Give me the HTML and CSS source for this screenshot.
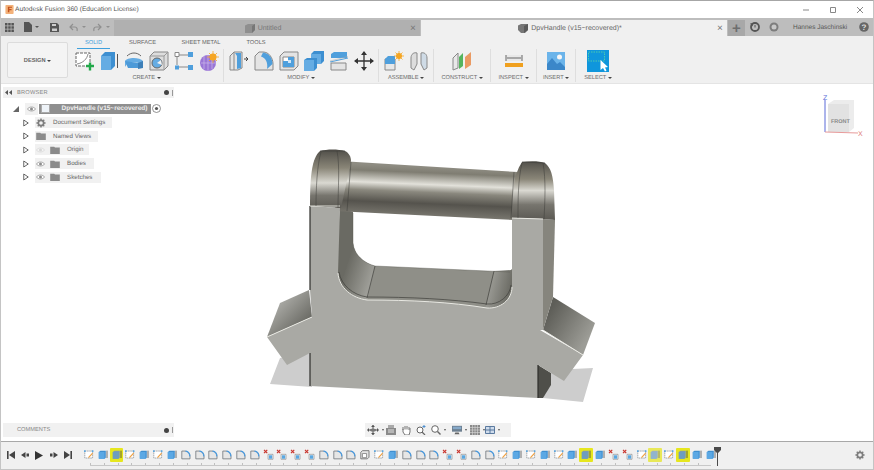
FILE: index.html
```html
<!DOCTYPE html>
<html lang="en">
<head>
<meta charset="utf-8">
<title>Autodesk Fusion 360</title>
<link rel="stylesheet" href="styles.css">
</head>
<body>
<svg class="defs" width="0" height="0">
  <defs>
    <symbol id="i-sketch" viewBox="0 0 14 14">
      <path d="M2 2.500H11.500V11H2Z" fill="#fff" stroke="#7d838b" stroke-width=".8" stroke-dasharray="2 .7"/>
      <path d="M6.500 10.500 11.500 5" stroke="#f0a040" stroke-width="1.400"/>
      <path d="M1 1.500h2v2H1zM10.500 1.500h2v2h-2z" fill="#5aa7e0"/>
    </symbol>
    <symbol id="i-ext" viewBox="0 0 14 14">
      <path d="M2 3.500 4 2H10.500V10.500L9 12H2Z" fill="#3f8fd0"/>
      <path d="M9 3.500V12H2V3.500Z" fill="#5ba8e4"/>
      <path d="M12 2V11" stroke="#555" stroke-width="1"/>
    </symbol>
    <symbol id="i-ext-g" viewBox="0 0 14 14">
      <path d="M2 3.500 4 2H10.500V10.500L9 12H2Z" fill="#7d9ab0"/>
      <path d="M9 3.500V12H2V3.500Z" fill="#6d9dc0"/>
      <path d="M12 2V11" stroke="#444" stroke-width="1"/>
    </symbol>
    <symbol id="i-fillet" viewBox="0 0 14 14">
      <path d="M2 12V2.500H6C9.500 2.500 12 5.500 12 9V12Z" fill="#e6e6e6" stroke="#72777e" stroke-width="1"/>
      <path d="M6.500 2.700C9.500 3 11.700 5.800 11.800 9" fill="none" stroke="#4a9be0" stroke-width="1.500"/>
    </symbol>
    <symbol id="i-x" viewBox="0 0 14 14">
      <path d="M1 1 5 5M5 1 1 5" stroke="#c8322a" stroke-width="1.400"/>
      <path d="M6 6.500H12V12.500H6Z" fill="#fff" stroke="#777" stroke-width=".7"/>
      <path d="M7 7.500H11V12H7Z" fill="#5aa7e0"/>
    </symbol>
    <symbol id="i-shell" viewBox="0 0 14 14">
      <path d="M2 4 4 2H12V10L10 12H2Z" fill="#e4e4e4" stroke="#666" stroke-width="1"/>
      <path d="M4 5.500H9V10.500H4Z" fill="#fff" stroke="#666" stroke-width=".8"/>
    </symbol>
    <symbol id="i-folder" viewBox="0 0 12 10">
      <path d="M0 1H5L6 2H12V10H0Z" fill="#8b8b8b"/>
    </symbol>
    <symbol id="i-eye" viewBox="0 0 12 8">
      <path d="M.5 4C3 .5 9 .5 11.500 4 9 7.500 3 7.500 .5 4Z" fill="#fff" stroke="#8d8d8d"/>
      <circle cx="6" cy="4" r="2" fill="#8d8d8d"/>
    </symbol>
    <symbol id="i-tri" viewBox="0 0 8 10">
      <path d="M1 1 7 5 1 9Z" fill="#fff" stroke="#555" stroke-width="1.200"/>
    </symbol>
    <symbol id="i-gear" viewBox="0 0 12 12">
      <circle cx="6" cy="6" r="3.200" fill="none" stroke="#7e7e7e" stroke-width="2"/>
      <path d="M6 .5V2.500M6 9.500V11.500M.5 6H2.500M9.500 6H11.500M2.100 2.100 3.500 3.500M8.500 8.500 9.900 9.900M9.900 2.100 8.500 3.500M3.500 8.500 2.100 9.900" stroke="#7e7e7e" stroke-width="1.700"/>
    </symbol>
    <linearGradient id="capL" gradientUnits="userSpaceOnUse" x1="325" y1="151" x2="325" y2="208">
      <stop offset="0" stop-color="#54524c"/><stop offset=".3" stop-color="#8a8678"/>
      <stop offset=".56" stop-color="#dad9d2"/><stop offset=".78" stop-color="#77756e"/><stop offset="1" stop-color="#5d5b55"/>
    </linearGradient>
    <linearGradient id="capR" gradientUnits="userSpaceOnUse" x1="530" y1="162" x2="530" y2="219">
      <stop offset="0" stop-color="#54524c"/><stop offset=".3" stop-color="#8a8678"/>
      <stop offset=".5" stop-color="#dad9d2"/><stop offset=".75" stop-color="#77756e"/><stop offset="1" stop-color="#5d5b55"/>
    </linearGradient>
    <linearGradient id="tube" gradientUnits="userSpaceOnUse" x1="431" y1="167" x2="429" y2="216">
      <stop offset="0" stop-color="#8e8c82"/><stop offset=".12" stop-color="#7f7d72"/><stop offset=".36" stop-color="#e2e1da"/>
      <stop offset=".52" stop-color="#8a887e"/><stop offset=".75" stop-color="#55534d"/><stop offset="1" stop-color="#77756d"/>
    </linearGradient>
    <linearGradient id="wingL" gradientUnits="userSpaceOnUse" x1="285" y1="300" x2="310" y2="325">
      <stop offset="0" stop-color="#a5a5a0"/><stop offset="1" stop-color="#62625c"/>
    </linearGradient>
    <linearGradient id="wingR" gradientUnits="userSpaceOnUse" x1="550" y1="310" x2="590" y2="335">
      <stop offset="0" stop-color="#5e5e58"/><stop offset="1" stop-color="#9c9c96"/>
    </linearGradient>
    <linearGradient id="inL" gradientUnits="userSpaceOnUse" x1="345" y1="270" x2="375" y2="280">
      <stop offset="0" stop-color="#6a6a63"/><stop offset="1" stop-color="#a5a59f"/>
    </linearGradient>
    <linearGradient id="inR" gradientUnits="userSpaceOnUse" x1="490" y1="280" x2="512" y2="285">
      <stop offset="0" stop-color="#9c9c96"/><stop offset="1" stop-color="#6a6a63"/>
    </linearGradient>
  </defs>
</svg>

<div class="app">
  <header class="titlebar">
    <svg class="app-logo" width="9" height="9" viewBox="0 0 10 11"><rect width="10" height="11" rx="1" fill="#f3b27a"/><path d="M3 9V2H8V3.500H4.800V5H7.500V6.500H4.800V9Z" fill="#c2521d"/></svg>
    <span class="app-title">Autodesk Fusion 360 (Education License)</span>
    <div class="win-controls">
      <svg width="8" height="8" viewBox="0 0 8 8"><path d="M1 4H7" stroke="#888"/></svg>
      <svg width="8" height="8" viewBox="0 0 8 8"><path d="M1.500 1.500H6.500V6.500H1.500Z" fill="none" stroke="#888"/></svg>
      <svg width="8" height="8" viewBox="0 0 8 8"><path d="M1 1 7 7M7 1 1 7" stroke="#888"/></svg>
    </div>
  </header>

  <div class="tabbar">
    <div class="quick">
      <svg class="q-grid" width="9" height="9" viewBox="0 0 9 9"><path d="M0 0h2.500v2.500H0zM3.200 0h2.500v2.500H3.200zM6.400 0h2.500v2.500H6.400zM0 3.200h2.500v2.500H0zM3.200 3.200h2.500v2.500H3.200zM6.400 3.200h2.500v2.500H6.400zM0 6.400h2.500v2.500H0zM3.200 6.400h2.500v2.500H3.200zM6.400 6.400h2.500v2.500H6.400z" fill="#555"/></svg>
      <svg class="q-file" width="16" height="10" viewBox="0 0 16 10"><path d="M0 0H5L8 3V10H0Z" fill="#555"/><path d="M11 4H15L13 6Z" fill="#555"/></svg>
      <svg class="q-save" width="9" height="9" viewBox="0 0 9 9"><path d="M0 0H7L9 2V9H0Z" fill="#555"/><path d="M2 1H6V3H2ZM2 5.500H7V8H2Z" fill="#ccc"/></svg>
      <svg class="q-undo" width="18" height="9" viewBox="0 0 18 9"><path d="M4 1 1 4 4 7M1 4H6C8 4 8.500 6 8 8" fill="none" stroke="#8f8f8f" stroke-width="1.200"/><path d="M13 3H17L15 5Z" fill="#8f8f8f"/></svg>
      <svg class="q-redo" width="18" height="9" viewBox="0 0 18 9"><path d="M5 1 8 4 5 7M8 4H3C1 4 .5 6 1 8" fill="none" stroke="#8f8f8f" stroke-width="1.200"/><path d="M13 3H17L15 5Z" fill="#8f8f8f"/></svg>
    </div>
    <div class="doc-tab inactive">
      <div class="tab-center">
        <svg width="10" height="9" viewBox="0 0 10 9"><path d="M0 1.500 3 0H10V6L7 9H0Z" fill="#8f8f8f"/><path d="M7 2V9L10 6V0Z" fill="#777"/></svg>
        <span>Untitled</span>
      </div>
      <span class="tab-close">×</span>
    </div>
    <div class="doc-tab active">
      <div class="tab-center">
        <svg width="10" height="9" viewBox="0 0 10 9"><path d="M0 1.500 3 0H10V6L7 9H3L0 6Z" fill="#777"/><path d="M6 2V9L10 6V0Z" fill="#5b5b5b"/></svg>
        <span>DpvHandle (v15~recovered)*</span>
      </div>
      <span class="tab-close">×</span>
    </div>
    <button class="plus-tab" type="button">+</button>
    <div class="user-area">
      <svg width="10" height="10" viewBox="0 0 10 10"><circle cx="5" cy="5" r="4" fill="none" stroke="#555" stroke-width="1.800"/><path d="M0 1.500 3.500 1 2.500 4.500Z" fill="#555"/><path d="M5 3V5.500" stroke="#555"/></svg>
      <svg width="10" height="10" viewBox="0 0 10 10"><circle cx="5" cy="5" r="4.500" fill="#7d7d7d"/><circle cx="5" cy="5" r="2.500" fill="#c8c8c8"/></svg>
      <span class="user-name">Hannes Jaschinski</span>
      <svg class="help" width="10" height="10" viewBox="0 0 10 10"><circle cx="5" cy="5" r="4.800" fill="#666"/><text x="5" y="7.800" class="help-q">?</text></svg>
    </div>
  </div>

  <section class="toolbar">
    <button class="design" type="button">DESIGN <i class="caret"></i></button>
    <div class="ribbon">
      <nav class="ribbon-tabs">
        <span class="rtab current">SOLID</span>
        <span class="rtab r2">SURFACE</span>
        <span class="rtab r3">SHEET METAL</span>
        <span class="rtab r4">TOOLS</span>
      </nav>
      <div class="groups">
        <div class="group g-create">
          <div class="icons">
            <svg width="20" height="20" viewBox="0 0 20 20"><path d="M2 2H16V15H2Z" fill="#fff" stroke="#666" stroke-dasharray="3 1"/><path d="M3 13C9 12 13 8 14 3" fill="none" stroke="#888"/><path d="M12 15H20M16 11.500V19.500" stroke="#22a84a" stroke-width="2.400"/></svg>
            <svg width="20" height="20" viewBox="0 0 20 20"><path d="M2 5 6 1H16V15L12 19H2Z" fill="#3d8fd1"/><path d="M2 5H12V19H2Z" fill="#65ace3"/><path d="M18.500 3V17" stroke="#555"/></svg>
            <svg width="20" height="20" viewBox="0 0 20 20"><path d="M1 10C3 6 16 6 19 10V16C16 12 14 11.500 10 11.500S3 12 1 16Z" fill="#65ace3"/><path d="M14 12 19 10V17L14 18Z" fill="#3d7fb8"/><path d="M1 10 4 17H14V12" fill="#4d9ad8"/><path d="M3 5C7 1 13 1 17 5" fill="none" stroke="#666"/></svg>
            <svg width="20" height="20" viewBox="0 0 20 20"><path d="M1 5 5 1H19V15L15 19H1Z" fill="#ddd" stroke="#888"/><path d="M15 5V19M1 5H15M15 5 19 1" stroke="#999" fill="none"/><circle cx="8" cy="12" r="5" fill="#65ace3" stroke="#666"/><path d="M8 12 12 9 13 14Z" fill="#f2f2f2"/></svg>
            <svg width="20" height="20" viewBox="0 0 20 20"><path d="M5 4H14M5 16H14M3 6V14" stroke="#888"/><path d="M1 1.500H5V5.500H1Z" fill="#fff" stroke="#888"/><path d="M14 1H19V6H14ZM14 14H19V19H14Z" fill="#4f9fdc"/><path d="M1 14.500H5V18.500H1Z" fill="#4f9fdc"/></svg>
            <svg width="20" height="20" viewBox="0 0 20 20"><circle cx="9" cy="12" r="8" fill="#9a76d6"/><path d="M2 12H17M9 4V20M5 5V18M13 5V18" stroke="#c6b2ea" stroke-width=".8"/><circle cx="14" cy="6" r="3.500" fill="#f5a623"/><path d="M14 0V12M8 6H20M10 2 18 10M18 2 10 10" stroke="#f5a623" stroke-width=".8"/></svg>
          </div>
          <span class="g-label">CREATE <i class="caret"></i></span>
        </div>
        <div class="group g-modify">
          <div class="icons">
            <svg width="20" height="20" viewBox="0 0 20 20"><path d="M1 5 5 1H13V17L9 19H1Z" fill="#e4e4e4" stroke="#888"/><path d="M5 1V19" stroke="#888"/><path d="M6 2H12V17L8 18V5Z" fill="#4f9fdc"/><path d="M15 8H19M17 6 19 8 17 10" fill="none" stroke="#444"/></svg>
            <svg width="20" height="20" viewBox="0 0 20 20"><path d="M1 19V5L5 1H9C15 1 19 7 19 13V19Z" fill="#e4e4e4" stroke="#888"/><path d="M9 1.500C15 2 18.500 7 18.500 13L13 18C14 12 12 7 7 5.500Z" fill="#4f9fdc"/></svg>
            <svg width="20" height="20" viewBox="0 0 20 20"><path d="M1 5 5 1H19V15L15 19H1Z" fill="#e4e4e4" stroke="#888"/><path d="M4 6H15V16H4Z" fill="#fff" stroke="#888"/><path d="M4 10H9V6H15V16H4Z" fill="#4f9fdc"/><path d="M9 10V12H12V9H9Z" fill="#cfe5f7"/></svg>
            <svg width="20" height="20" viewBox="0 0 20 20"><path d="M7 3 10 0H20V10L17 13H14V8H7Z" fill="#3d8fd1"/><path d="M7 3H17V13H7Z" fill="#65ace3"/><path d="M0 9 3 7H13V17L10 20H0Z" fill="#3d8fd1"/><path d="M0 9H10V20H0Z" fill="#65ace3"/></svg>
            <svg width="20" height="20" viewBox="0 0 20 20"><path d="M2 3 5 1H18V7H2Z" fill="#4f9fdc"/><path d="M1 11 19 7" stroke="#4f9fdc" stroke-width="1"/><path d="M1 10 19 5.500" stroke="#aaa" stroke-width=".5"/><path d="M2 12H17V19H2Z" fill="#e4e4e4" stroke="#888"/></svg>
            <svg width="20" height="20" viewBox="0 0 20 20"><path d="M10 1V19M1 10H19" stroke="#333" stroke-width="1.300"/><path d="M10 0 13 4H7ZM10 20 13 16H7ZM0 10 4 7V13ZM20 10 16 7V13Z" fill="#333"/></svg>
          </div>
          <span class="g-label">MODIFY <i class="caret"></i></span>
        </div>
        <div class="group g-assemble">
          <div class="icons">
            <svg width="20" height="20" viewBox="0 0 20 20"><path d="M1 8H11V19H1Z" fill="#e8e8e8" stroke="#888"/><path d="M1 8 4 5H11V13H1Z" fill="#4f9fdc"/><circle cx="15" cy="5" r="3" fill="#f5a623"/><path d="M15 0V10M10 5H20M11.500 1.500 18.500 8.500M18.500 1.500 11.500 8.500" stroke="#f5a623" stroke-width=".8"/></svg>
            <svg width="20" height="20" viewBox="0 0 20 20"><path d="M2 17V7C2 3 5 1 8 2V13L5 19Z" fill="#ddd" stroke="#888"/><path d="M18 17V7C18 3 15 1 12 2V13L15 19Z" fill="#cfdbe6" stroke="#888"/></svg>
          </div>
          <span class="g-label">ASSEMBLE <i class="caret"></i></span>
        </div>
        <div class="group g-construct">
          <div class="icons">
            <svg width="20" height="20" viewBox="0 0 20 20"><path d="M1 7 6 2V17L1 19Z" fill="#e8e8e8" stroke="#888"/><path d="M7 6 11 2V15L7 18Z" fill="#55b45e"/><path d="M13 6 19 1V14L13 18Z" fill="#ea9a63"/></svg>
          </div>
          <span class="g-label">CONSTRUCT <i class="caret"></i></span>
        </div>
        <div class="group g-inspect">
          <div class="icons">
            <svg width="20" height="20" viewBox="0 0 20 20"><path d="M2 4H18V10H2Z" fill="#e8e8e8"/><path d="M2 4V10M18 4V10M3 7H17" stroke="#666"/><path d="M1 12H19V16H1Z" fill="#f0a01e"/></svg>
          </div>
          <span class="g-label">INSPECT <i class="caret"></i></span>
        </div>
        <div class="group g-insert">
          <div class="icons">
            <svg width="18" height="18" viewBox="0 0 18 18"><rect width="18" height="18" fill="#6bb4ea"/><circle cx="12.500" cy="5" r="2.500" fill="#f7f7f7"/><path d="M0 12 5 6 10 12 13 10 18 15V18H0Z" fill="#3b87c9"/></svg>
          </div>
          <span class="g-label">INSERT <i class="caret"></i></span>
        </div>
        <div class="group g-select">
          <div class="icons">
            <svg width="22" height="22" viewBox="0 0 22 22"><rect width="22" height="22" fill="#0f96dc"/><path d="M1.500 2H17.500V11H1.500Z" fill="none" stroke="#55d0a8" stroke-width=".9" stroke-dasharray="1.500 1"/><path d="M13.500 10V20L16 18 18 21.500 19.500 20.500 18 17.500 21 17Z" fill="#fff"/></svg>
          </div>
          <span class="g-label">SELECT <i class="caret"></i></span>
        </div>
      </div>
    </div>
  </section>

  <main class="canvas">
    <svg class="scene" viewBox="0 84 874 358" width="874" height="358">
      <path d="M270 384 280 358 312 353V387ZM552 370 593 368 583 402 543 398Z" fill="#cdcdcd"/>
      <path d="M267 337 280 303 309 290 312 317Z" fill="url(#wingL)"/>
      <path d="M553 297 595 323 583 355 543 330Z" fill="url(#wingR)"/>
      <path d="M538 398H543L551 385V373L538 365Z" fill="#4f4f4a"/>
      <path d="M543 219 555 220 553 297 543 330Z" fill="#86857d"/>
      <path d="M340 208 353 212V243C354 255 364 263 375 266L510 272 513 268V292L487 320 350 312 335 275Z" fill="#8f8f88"/>
      <path d="M340 208 353 212V243C354 255 364 263 375 266L365 310 345 305 335 275Z" fill="url(#inL)"/>
      <path d="M494 271 511 270 513 268V292L503 315 484 315Z" fill="url(#inR)"/>
      <path d="M340 161 518 172 514 220 335 211Z" fill="url(#tube)"/>
      <path d="M310 206C310 175 312 158 320 151 327 149 338 149 345 151 349 153 351 157 351 161L346 185 341 208Z" fill="url(#capL)"/>
      <path d="M512 218C512 195 513 175 522 162 530 161 540 161 545 163 551 168 553 175 554 190L555 220 543 219Z" fill="url(#capR)"/>
      <path d="M310 206 340 208 338 273C339 288 352 298 367 300 410 300 450 302 487 308 500 309 512 300 512 287V218L543 219V330L540 330 583 355 564 381 538 365V398L310 386V353L287 365 267 337 312 317 310 290Z" fill="#a9a9a4"/>
      <path d="M338 273C339 288 352 298 367 300 410 300 450 302 487 308 500 309 512 300 512 287" fill="none" stroke="#e8e8e2" stroke-width="1"/>
      <path d="M339 272C341 285 353 295 367 297 410 297 450 299 487 304 499 305 510 296 511 285" fill="none" stroke="#3f3f3b" stroke-width=".7"/>
      <path d="M375 266 367 298M494 271 486 305" fill="none" stroke="#3f3f3b" stroke-width=".7"/>
      <path d="M310 206V290M310 353V386M538 365V398" stroke="#2f2f2c" stroke-width="1.200" fill="none"/>
      <path d="M267 337 312 317M543 330 583 355M310 206H340M512 218 543 219" stroke="#eeeee8" stroke-width=".9" fill="none"/>
      <path d="M321 152C317 165 316 190 316 206M337 151C340 165 338 190 338 208M351 162 347 211M514 172 511 218M522 163C518 180 518 200 518 218M543 163C546 180 545 200 544 219" stroke="#3d3d39" stroke-width=".5" fill="none"/>
      <path d="M320 151 345 151M522 162 545 163" stroke="#3d3d39" stroke-width=".6" fill="none"/>
      <path d="M353 213V243C354 255 364 263 375 266L510 272" stroke="#55554f" stroke-width=".4" fill="none"/>
      <g>
        <path d="M828 104 834 100H854V128L849 132H828Z" fill="#ececec"/>
        <path d="M828 104H849V132H828Z" fill="#e2e2e2"/>
        <path d="M825 100V132" stroke="#5b6bd8"/>
        <path d="M825 132 858 133" stroke="#e79a9a"/>
        <text x="823" y="100" class="axis axis-z">Z</text>
        <text x="858" y="136" class="axis axis-x">X</text>
        <text x="831" y="123" class="cube-label">FRONT</text>
      </g>
    </svg>

    <aside class="browser">
      <div class="panel-head">
        <svg class="panel-back" width="7" height="5" viewBox="0 0 7 5"><path d="M3 0V5L0 2.500ZM7 0V5L4 2.500Z" fill="#555"/></svg>
        <span class="panel-title">BROWSER</span>
        <span class="panel-dot"></span>
        <span class="panel-grip"></span>
      </div>
      <ul class="tree">
        <li class="row root">
          <svg class="expander" width="6" height="6" viewBox="0 0 6 6"><path d="M6 0V6H0Z" fill="#666"/></svg>
          <span class="eye-box"><svg width="9" height="6"><use href="#i-eye"/></svg></span>
          <span class="root-label"><i class="doc-icon"></i><b>DpvHandle (v15~recovered)</b></span>
          <svg class="radio" width="9" height="9" viewBox="0 0 9 9"><circle cx="4.500" cy="4.500" r="4" fill="#fff" stroke="#777" stroke-width=".8"/><circle cx="4.500" cy="4.500" r="1.600" fill="#555"/></svg>
        </li>
        <li class="row">
          <svg class="tri" width="6" height="8"><use href="#i-tri"/></svg>
          <span class="item w-doc"><svg width="10" height="10"><use href="#i-gear"/></svg><span class="lbl">Document Settings</span></span>
        </li>
        <li class="row">
          <svg class="tri" width="6" height="8"><use href="#i-tri"/></svg>
          <span class="item w-views"><svg width="10" height="8"><use href="#i-folder"/></svg><span class="lbl">Named Views</span></span>
        </li>
        <li class="row">
          <svg class="tri" width="6" height="8"><use href="#i-tri"/></svg>
          <span class="item w-origin"><svg class="faded" width="9" height="6"><use href="#i-eye"/></svg><svg width="10" height="8"><use href="#i-folder"/></svg><span class="lbl">Origin</span></span>
        </li>
        <li class="row">
          <svg class="tri" width="6" height="8"><use href="#i-tri"/></svg>
          <span class="item w-bodies"><svg width="9" height="6"><use href="#i-eye"/></svg><svg width="10" height="8"><use href="#i-folder"/></svg><span class="lbl">Bodies</span></span>
        </li>
        <li class="row">
          <svg class="tri" width="6" height="8"><use href="#i-tri"/></svg>
          <span class="item w-sketches"><svg width="9" height="6"><use href="#i-eye"/></svg><svg width="10" height="8"><use href="#i-folder"/></svg><span class="lbl">Sketches</span></span>
        </li>
      </ul>
    </aside>

    <aside class="comments">
      <span class="comments-title">COMMENTS</span>
      <span class="panel-dot"></span>
      <span class="panel-grip"></span>
    </aside>

    <div class="navbar">
      <svg width="12" height="10" viewBox="0 0 12 10"><path d="M6 0V10M1 5H11" stroke="#555"/><path d="M6 0 8 2H4ZM6 10 8 8H4ZM0 5 2 3V7ZM12 5 10 3V7Z" fill="#555"/><ellipse cx="6" cy="5" rx="3" ry="1.500" fill="#777"/></svg>
      <i class="caret small"></i>
      <svg class="n1" width="10" height="10" viewBox="0 0 10 10"><path d="M0 3H10V10H0Z" fill="#8a8a8a"/><path d="M2 0H8V3H2Z" fill="#aaa"/><path d="M2 5H8M2 7H8" stroke="#e2e2e2"/></svg>
      <svg class="n3" width="10" height="10" viewBox="0 0 10 10"><path d="M2 5V2M4 4.500V1M6 4.500V1M8 5V2M2 4V7L4 10H8L9 7V3" fill="#fff" stroke="#666" stroke-width=".9"/></svg>
      <svg class="n3" width="10" height="10" viewBox="0 0 10 10"><circle cx="4" cy="5" r="3" fill="#fff" stroke="#666"/><path d="M6 7 9 10" stroke="#666" stroke-width="1.200"/><path d="M8 0V3M6.500 1.500H9.500" stroke="#4d8fd0"/></svg>
      <svg class="n3" width="10" height="10" viewBox="0 0 10 10"><circle cx="4" cy="4" r="3.300" fill="#fff" stroke="#666"/><path d="M6.500 6.500 9.500 9.500" stroke="#666" stroke-width="1.400"/></svg>
      <i class="caret small"></i>
      <svg class="n2" width="10" height="10" viewBox="0 0 12 10"><rect width="12" height="7" fill="#6d7f90"/><path d="M1 1H11V4H1Z" fill="#86a9c9"/><path d="M4 8H8L9 10H3Z" fill="#666"/></svg>
      <i class="caret small"></i>
      <svg width="10" height="10" viewBox="0 0 10 10"><path d="M0 0H10V10H0Z" fill="#8a8a8a"/><path d="M0 2.500H10M0 5H10M0 7.500H10M2.500 0V10M5 0V10M7.500 0V10" stroke="#d8d8d8" stroke-width=".6"/></svg>
      <i class="caret small"></i>
      <svg class="n4" width="10" height="10" viewBox="0 0 10 10"><path d="M.5 1.500H9.500V8.500H.5ZM5 1.500V8.500M.5 5H9.500" fill="#cfdcec" stroke="#4d6e96" stroke-width=".9"/></svg>
      <i class="caret small"></i>
    </div>
  </main>

  <footer class="timeline">
    <div class="playback">
      <svg width="8" height="8" viewBox="0 0 8 8"><path d="M0 0H1.600V8H0ZM8 0V8L2 4Z" fill="#444"/></svg>
      <svg width="8" height="8" viewBox="0 0 8 8"><path d="M4.500 1V7L0 4ZM5.500 2.500H8V5.500H5.500Z" fill="#444"/></svg>
      <svg width="8" height="9" viewBox="0 0 8 9"><path d="M0 0 8 4.500 0 9Z" fill="#333"/></svg>
      <svg width="8" height="8" viewBox="0 0 8 8"><path d="M3.500 1V7L8 4ZM0 2.500H2.500V5.500H0Z" fill="#444"/></svg>
      <svg width="8" height="8" viewBox="0 0 8 8"><path d="M6.400 0H8V8H6.400ZM0 0V8L6 4Z" fill="#444"/></svg>
    </div>
    <div class="track">
      <div class="steps">
        <svg class="s"><use href="#i-sketch"/></svg>
        <svg class="s"><use href="#i-ext"/></svg>
        <svg class="s hl"><use href="#i-ext-g"/></svg>
        <svg class="s"><use href="#i-sketch"/></svg>
        <svg class="s"><use href="#i-ext"/></svg>
        <svg class="s"><use href="#i-sketch"/></svg>
        <svg class="s"><use href="#i-ext"/></svg>
        <svg class="s"><use href="#i-fillet"/></svg>
        <svg class="s"><use href="#i-fillet"/></svg>
        <svg class="s"><use href="#i-fillet"/></svg>
        <svg class="s"><use href="#i-fillet"/></svg>
        <svg class="s"><use href="#i-fillet"/></svg>
        <svg class="s"><use href="#i-fillet"/></svg>
        <svg class="s"><use href="#i-x"/></svg>
        <svg class="s"><use href="#i-x"/></svg>
        <svg class="s"><use href="#i-x"/></svg>
        <svg class="s"><use href="#i-x"/></svg>
        <svg class="s"><use href="#i-fillet"/></svg>
        <svg class="s"><use href="#i-fillet"/></svg>
        <svg class="s"><use href="#i-fillet"/></svg>
        <svg class="s"><use href="#i-shell"/></svg>
        <svg class="s"><use href="#i-sketch"/></svg>
        <svg class="s"><use href="#i-ext"/></svg>
        <svg class="s"><use href="#i-fillet"/></svg>
        <svg class="s"><use href="#i-fillet"/></svg>
        <svg class="s"><use href="#i-fillet"/></svg>
        <svg class="s"><use href="#i-x"/></svg>
        <svg class="s"><use href="#i-x"/></svg>
        <svg class="s"><use href="#i-fillet"/></svg>
        <svg class="s"><use href="#i-fillet"/></svg>
        <svg class="s"><use href="#i-sketch"/></svg>
        <svg class="s"><use href="#i-ext"/></svg>
        <svg class="s"><use href="#i-sketch"/></svg>
        <svg class="s"><use href="#i-ext"/></svg>
        <svg class="s"><use href="#i-sketch"/></svg>
        <svg class="s"><use href="#i-ext"/></svg>
        <svg class="s hl"><use href="#i-ext-g"/></svg>
        <svg class="s"><use href="#i-ext"/></svg>
        <svg class="s"><use href="#i-x"/></svg>
        <svg class="s"><use href="#i-x"/></svg>
        <svg class="s"><use href="#i-sketch"/></svg>
        <svg class="s hl faint"><use href="#i-ext-g"/></svg>
        <svg class="s"><use href="#i-sketch"/></svg>
        <svg class="s hl"><use href="#i-ext-g"/></svg>
        <svg class="s"><use href="#i-ext"/></svg>
        <svg class="s"><use href="#i-ext"/></svg>
      </div>
      <div class="ruler"></div>
      <svg class="marker" width="7" height="19" viewBox="0 0 7 19"><path d="M0 0H7V3L4 6V19H3V6L0 3Z" fill="#4a4a4a"/></svg>
    </div>
    <svg class="tl-gear" width="10" height="10"><use href="#i-gear"/></svg>
  </footer>
</div>
</body>
</html>
```

FILE: styles.css
```css
* { box-sizing: border-box; }
html, body { margin: 0; padding: 0; height: 100%; overflow: hidden; background: #fff; }
body { font-family: "Liberation Sans", Arial, sans-serif; color: #666; text-rendering: geometricPrecision; }
.defs { position: absolute; }
svg { display: block; flex: none; }
ul { list-style: none; margin: 0; padding: 0; }
i { font-style: normal; }
button { font: inherit; color: inherit; }

.app {
  width: 874px; height: 470px; display: flex; flex-direction: column;
  border-top: 1px solid #a6a6a6; border-left: 1px solid #c4c4c4; border-right: 1px solid #c4c4c4; border-bottom: 1px solid #c4c4c4;
}

.titlebar { height: 17px; flex: none; display: flex; align-items: center; padding-left: 4px; background: #fff; }
.app-logo { margin-right: 1px; }
.app-title { font-size: 6.700px; color: #555; }
.win-controls { margin-left: auto; display: flex; gap: 19px; margin-right: 9px; }

.tabbar { height: 18px; flex: none; display: flex; align-items: flex-end; background: #bdbdbd; }
.quick { width: 113px; height: 18px; flex: none; display: flex; align-items: center; padding-left: 4px; }
.q-file { margin-left: 10px; }
.q-save { margin-left: 10px; }
.q-undo { margin-left: 10px; }
.q-redo { margin-left: 6px; }
.doc-tab { width: 306px; height: 16px; flex: none; display: flex; align-items: center; position: relative; font-size: 7px; }
.doc-tab.inactive { background: #b0b0b0; color: #777; margin-right: 1px; }
.doc-tab.active { background: #f0f0f0; color: #666; }
.tab-center { flex: 1; display: flex; align-items: center; justify-content: center; gap: 3px; padding-left: 4px; }
.tab-close { width: 10px; margin-right: 2px; font-size: 10px; text-align: center; color: #777; flex: none; }
.plus-tab {
  width: 17px; height: 16px; flex: none; margin-left: 1px; padding: 0; border: 0; background: #a8a8a8; color: #6e6e6e;
  font-size: 15px; line-height: 14px; font-weight: bold;
}
.user-area { flex: 1; height: 18px; display: flex; align-items: center; padding-left: 5px; }
.user-area svg + svg { margin-left: 9px; }
.user-name { font-size: 6.500px; margin-left: 14px; color: #555; }
.user-area .help { margin-left: auto; margin-right: 4px; }
.help-q { font-size: 8px; font-weight: bold; fill: #ddd; text-anchor: middle; font-family: "Liberation Sans", sans-serif; }

.toolbar { height: 48px; flex: none; display: flex; background: #f0f0f0; border-bottom: 1px solid #e4e4e4; }
.design {
  width: 61px; height: 36px; flex: none; margin: 6px 0 0 6px; background: #f4f4f4;
  border: 1px solid #dcdcdc; border-radius: 2px; font-size: 5.700px; font-weight: bold; color: #666; padding: 0;
}
.caret {
  display: inline-block; width: 0; height: 0; vertical-align: middle;
  border-left: 2px solid transparent; border-right: 2px solid transparent; border-top: 2.500px solid #444;
}
.ribbon { flex: 1; display: flex; flex-direction: column; padding-left: 9px; }
.ribbon-tabs { height: 13px; flex: none; display: flex; padding-top: 3px; font-size: 5.700px; color: #666; }
.rtab { display: block; height: 10px; line-height: 8px; text-align: center; }
.rtab.current { width: 33px; color: #3fa0dc; border-bottom: 1px solid #3fa0dc; }
.r2 { width: 33px; margin-left: 16px; }
.r3 { width: 50px; margin-left: 17px; }
.r4 { width: 30px; margin-left: 15px; }

.groups { display: flex; height: 34px; margin-left: -7px; }
.group { height: 33px; display: flex; flex-direction: column; align-items: center; justify-content: space-between; border-right: 1px solid #dedede; padding-top: 1px; }
.icons { display: flex; align-items: center; height: 22px; }
.g-label { font-size: 5.700px; color: #6e6e6e; white-space: nowrap; line-height: 8px; }
.g-create { width: 154px; }
.g-create .icons { gap: 5px; }
.g-modify { width: 155px; }
.g-modify .icons { gap: 5px; }
.g-assemble { width: 55px; }
.g-assemble .icons { gap: 5px; }
.g-construct { width: 57px; }
.g-inspect { width: 46px; }
.g-insert { width: 39px; }
.g-select { width: 44px; border-right: 0; }

.canvas { flex: 1; position: relative; background: #fff; overflow: hidden; }
.scene { position: absolute; left: -1px; top: 0; }
.axis { font-size: 7px; font-family: "Liberation Sans", sans-serif; }
.axis-z { fill: #5b6bd8; }
.axis-x { fill: #e08080; }
.cube-label { font-size: 5.500px; font-weight: bold; fill: #888; font-family: "Liberation Sans", sans-serif; }

.browser { position: absolute; left: 2px; top: 3px; width: 171px; }
.panel-head { height: 11px; display: flex; align-items: center; background: #f1f1f1; padding-left: 2px; }
.panel-back { margin-right: 5px; }
.panel-title { font-size: 5.700px; color: #888; letter-spacing: .2px; }
.panel-dot { width: 5px; height: 5px; border-radius: 50%; background: #444; margin-left: auto; }
.panel-grip { width: 1px; height: 6px; background: #999; margin: 0 1px 0 3px; }

.tree { padding-top: 4px; font-size: 6.200px; color: #666; }
.row { height: 13.700px; display: flex; align-items: center; padding-left: 20px; }
.tri { margin-right: 6px; }
.root { padding-left: 10px; }
.expander { margin-right: 6px; }
.eye-box { width: 13px; height: 12px; background: #f1f1f1; display: flex; align-items: center; justify-content: center; }
.root-label {
  width: 112px; height: 10px; background: #8f8f8f; color: #f0f0f0; display: flex; align-items: center; position: relative; margin-left: 1px;
}
.root-label b { flex: 1; text-align: center; font-size: 6.500px; padding-left: 8px; }
.doc-icon { width: 9px; height: 9px; background: #eef3f8; border: 1px solid #aaa; margin-left: 2px; flex: none; }
.radio { margin-left: 1px; }
.item { height: 11px; background: #f1f1f1; display: flex; align-items: center; gap: 5px; padding-left: 1px; }
.w-doc { width: 77px; }
.w-views { width: 63px; }
.w-origin { width: 54px; }
.w-bodies { width: 59px; }
.w-sketches { width: 66px; }
.lbl { margin-left: 2px; }
.faded { opacity: .25; }

.comments {
  position: absolute; left: 2px; bottom: 4px; width: 171px; height: 14px; display: flex; align-items: center;
  background: #f1f1f1; padding-left: 14px;
}
.comments-title { font-size: 5.700px; color: #888; }

.navbar {
  position: absolute; left: 364px; bottom: 4px; width: 146px; height: 14px; background: #f1f1f1;
  display: flex; align-items: center; padding-left: 2px; gap: 3px;
}
.caret.small { border-left-width: 1.500px; border-right-width: 1.500px; border-top-width: 2px; border-top-color: #555; }
.n1 { margin-left: -1px; }
.n2 { margin-left: 3px; }
.n3 { margin-left: 2px; }
.n4 { margin-left: -3px; }

.timeline { height: 28px; flex: none; display: flex; align-items: flex-start; background: #f0f0f0; border-top: 1px solid #a8a8a8; position: relative; }
.playback { width: 81px; flex: none; height: 26px; display: flex; align-items: center; gap: 6.200px; padding-left: 6px; }
.track { width: 660px; height: 26px; position: relative; flex: none; }
.steps { display: flex; padding-top: 6px; }
.s { width: 13.820px; height: 13.500px; padding: 1px; flex: none; }
.s.hl { background: #e6e61e; border-radius: 1px; }
.s.faint { opacity: .72; }
.ruler {
  height: 3px; margin: 1px 0 0 8px; width: 621px; border-bottom: 1px solid #c8c8c8;
  background: repeating-linear-gradient(90deg, #c0c0c0 0 1px, transparent 1px 13.820px);
}
.marker { position: absolute; left: 632px; top: 5px; }
.tl-gear { position: absolute; right: 8px; top: 8px; }
```
